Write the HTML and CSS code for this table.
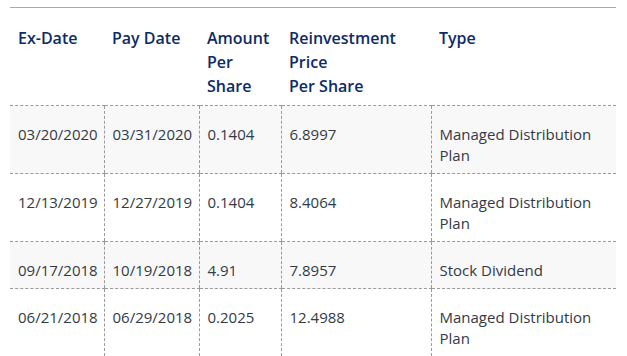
FILE: index.html
```html
<!DOCTYPE html>
<html>
<head>
<meta charset="utf-8">
<link rel="stylesheet" href="styles.css">
</head>
<body>
<div class="wrap">
<table class="dist">
  <colgroup>
    <col class="c1"><col class="c2"><col class="c3"><col class="c4"><col class="c5">
  </colgroup>
  <thead>
    <tr>
      <th>Ex-Date</th>
      <th>Pay Date</th>
      <th>Amount Per Share</th>
      <th>Reinvestment Price<br>Per Share</th>
      <th>Type</th>
    </tr>
  </thead>
  <tbody>
    <tr class="alt">
      <td>03/20/2020</td><td>03/31/2020</td><td>0.1404</td><td>6.8997</td><td>Managed Distribution Plan</td>
    </tr>
    <tr>
      <td>12/13/2019</td><td>12/27/2019</td><td>0.1404</td><td>8.4064</td><td>Managed Distribution Plan</td>
    </tr>
    <tr class="alt">
      <td>09/17/2018</td><td>10/19/2018</td><td>4.91</td><td>7.8957</td><td>Stock Dividend</td>
    </tr>
    <tr>
      <td>06/21/2018</td><td>06/29/2018</td><td>0.2025</td><td>12.4988</td><td>Managed Distribution Plan</td>
    </tr>
  </tbody>
</table>
</div>
</body>
</html>
```
FILE: styles.css
```css
html, body {
  margin: 0;
  padding: 0;
  background: #fff;
}
.wrap {
  padding: 7px 11px 0 10px;
}
.dist {
  width: 606px;
  table-layout: fixed;
  border-collapse: collapse;
  font-family: "Open Sans", "Liberation Sans", sans-serif;
  border-top: 1px solid #aaaaaa;
}
.c1 { width: 94px; }
.c2 { width: 95px; }
.c3 { width: 82px; }
.c4 { width: 150px; }
.c5 { width: 185px; }
.dist th {
  text-align: left;
  vertical-align: top;
  font-size: 16px;
  font-weight: 600;
  line-height: 24px;
  color: #0d2b66;
  padding: 18px 8px 7px 8px;
  border-bottom: 1px dashed #9a9a9a;
}
.dist td {
  vertical-align: top;
  font-size: 15px;
  line-height: 21px;
  color: #333a45;
  padding: 18px 8px 7px 8px;
  border-bottom: 1px dashed #9a9a9a;
  border-left: 1px dashed #9a9a9a;
}
.dist td:first-child {
  border-left: none;
}
.dist tr.alt td {
  background: #f8f8f8;
}
```
